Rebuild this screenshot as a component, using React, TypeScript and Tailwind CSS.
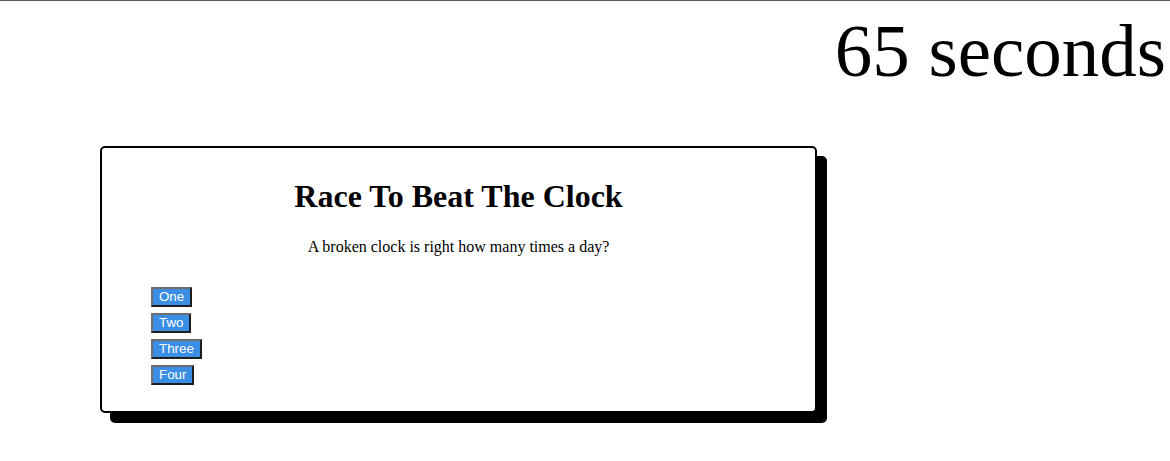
import React from "react";

export default function App() {
  const answers = ["One", "Two", "Three", "Four"];
  return (
    <div className="w-[1170px] h-[461px] bg-white border-t border-[#5a5a5a] overflow-hidden" style={{ fontFamily: '"Liberation Serif", "Times New Roman", serif' }}>
      <div className="flex justify-end pr-[4px] pt-[8px]">
        <div className="text-[75px] leading-[83px] text-black" style={{ fontFamily: '"Liberation Serif", "Times New Roman", serif' }}>65 seconds</div>
      </div>
      <div className="pl-[100px] mt-[54px]">
        <div className="w-[717px] h-[267px] border-2 border-black rounded-[5px] bg-white shadow-[10px_10px_0_#000] pt-[30px]">
          <h1 className="text-[32px] leading-[36px] font-bold text-center text-black m-0">Race To Beat The Clock</h1>
          <p className="text-[16px] leading-[18px] text-center text-black mt-[24px]">A broken clock is right how many times a day?</p>
          <div className="flex flex-col items-start gap-[6px] pl-[49px] mt-[31px]">
            {answers.map((a) => (
              <button
                key={a}
                className="bg-[#3a8ee4] text-white text-[13.33px] leading-[14px] px-[6px] py-[1px] border-2 border-t-[#6e6e6e] border-l-[#6e6e6e] border-r-[#1e1e1e] border-b-[#1e1e1e]"
                style={{ fontFamily: '"Liberation Sans", Arial, sans-serif' }}
              >
                {a}
              </button>
            ))}
          </div>
        </div>
      </div>
    </div>
  );
}
